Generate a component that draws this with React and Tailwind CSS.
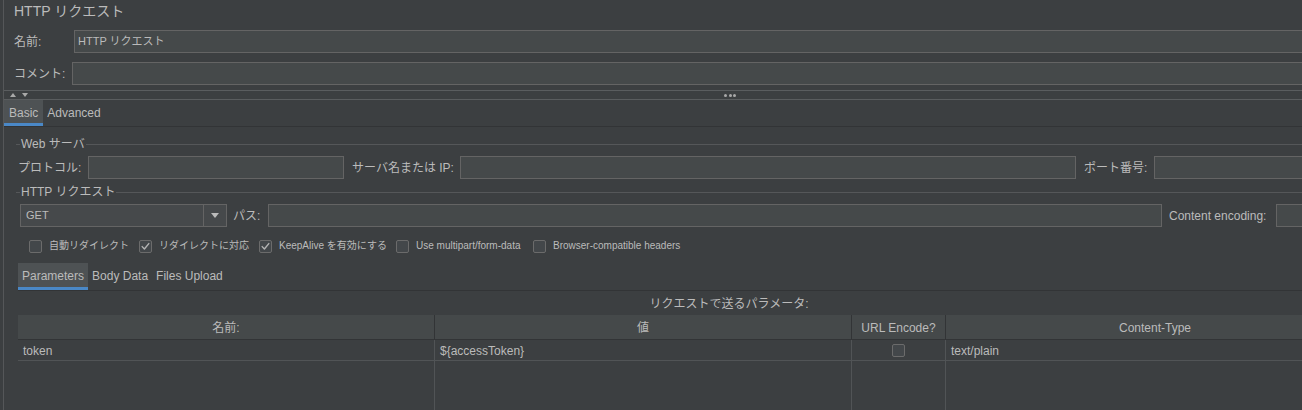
import { ChevronDown } from "lucide-react";

const inputCls = "h-[23px] border border-[#646464] bg-[#45494a] text-[11px] leading-[21px] px-[3px] truncate";

function Check({ checked }) {
  return (
    <div className="w-[13px] h-[13px] shrink-0 rounded-[2px] border border-[#6b6b6b] bg-[#43474a] flex items-center justify-center">
      {checked && (
        <svg width="11" height="11" viewBox="0 0 11 11">
          <path d="M2.2 5.6 L4.4 8 L8.8 2.6" fill="none" stroke="#b4b4b4" strokeWidth="1.4" strokeLinecap="round" strokeLinejoin="round" />
        </svg>
      )}
    </div>
  );
}

function CheckItem({ checked, label, w }) {
  return (
    <div className={`flex items-center gap-[7px] shrink-0 ${w}`}>
      <Check checked={checked} />
      <span className="text-[10px] leading-[14px] whitespace-nowrap">{label}</span>
    </div>
  );
}

function GroupTitle({ children }) {
  return (
    <div className="flex items-center h-[14px]">
      <div className="w-[4px] h-px bg-[#555759]" />
      <span className="px-[1px] text-[12px] leading-[14px] whitespace-nowrap">{children}</span>
      <div className="flex-1 h-px bg-[#555759]" />
    </div>
  );
}

export default function App() {
  return (
    <div className="w-[1302px] h-[410px] overflow-hidden bg-[#3c3f41] text-[#bbbbbb] font-['Liberation_Sans','Noto_Sans_CJK_JP',sans-serif]">
      <div className="ml-[3px] w-[1453px] h-full border-l border-[#555759] flex flex-col">
        {/* title */}
        <div className="h-[22px] pl-[10px] text-[14px] leading-[22px] whitespace-nowrap">HTTP リクエスト</div>

        {/* name */}
        <div className="mt-[8px] flex items-center">
          <div className="w-[70px] pl-[10px] text-[12px] shrink-0">名前:</div>
          <div className={`flex-1 ${inputCls}`}>HTTP リクエスト</div>
        </div>
        {/* comment */}
        <div className="mt-[9px] flex items-center">
          <div className="w-[68px] pl-[10px] text-[12px] shrink-0 whitespace-nowrap">コメント:</div>
          <div className={`flex-1 ${inputCls}`} />
        </div>

        {/* splitter */}
        <div className="mt-[5px] h-[10px] border-y border-[#5a5d5f] grid grid-cols-[1fr_auto_1fr] items-center">
          <div className="flex items-center gap-[6px] pl-[6px]">
            <svg width="6" height="4" viewBox="0 0 6 4"><path d="M0 4 L3 0 L6 4 Z" fill="#a9a9a9" /></svg>
            <svg width="6" height="4" viewBox="0 0 6 4"><path d="M0 0 L6 0 L3 4 Z" fill="#a9a9a9" /></svg>
          </div>
          <div className="flex gap-[1.7px]">
            <div className="w-[3px] h-[3px] rounded-full bg-[#a9a9a9]" />
            <div className="w-[3px] h-[3px] rounded-full bg-[#a9a9a9]" />
            <div className="w-[3px] h-[3px] rounded-full bg-[#a9a9a9]" />
          </div>
          <div />
        </div>

        {/* main tabs */}
        <div className="h-[27px] flex border-b border-[#323436]">
          <div className="h-full px-[5px] pt-[2px] bg-[#4e5254] border-b-[3px] border-[#4a88c7] flex items-center text-[12px]">Basic</div>
          <div className="h-full px-[4px] pt-[2px] flex items-center text-[12px] pb-[3px]">Advanced</div>
        </div>

        {/* Web server group */}
        <div className="mt-[10px] ml-[12px]">
          <GroupTitle>Web サーバ</GroupTitle>
          <div className="mt-[5px] flex items-center pl-[2px]">
            <div className="w-[70px] shrink-0 text-[12px] whitespace-nowrap">プロトコル:</div>
            <div className={`w-[256px] shrink-0 ${inputCls}`} />
            <div className="w-[108px] ml-[8px] shrink-0 text-[12px] whitespace-nowrap">サーバ名または IP:</div>
            <div className={`w-[616px] shrink-0 ${inputCls}`} />
            <div className="w-[70px] ml-[8px] shrink-0 text-[12px] whitespace-nowrap">ポート番号:</div>
            <div className={`flex-1 ${inputCls}`} />
          </div>
        </div>

        {/* HTTP request group */}
        <div className="mt-[6px] ml-[12px]">
          <GroupTitle>HTTP リクエスト</GroupTitle>
          <div className="mt-[5px] flex items-center pl-[4px]">
            <div className="w-[207px] h-[23px] shrink-0 border border-[#646464] bg-[#46494b] flex">
              <div className="flex-1 px-[5px] text-[11px] leading-[21px]">GET</div>
              <div className="w-[23px] border-l border-[#646464] flex items-center justify-center">
                <svg width="8" height="5" viewBox="0 0 8 5"><path d="M0 0 L8 0 L4 5 Z" fill="#bbbbbb" /></svg>
              </div>
            </div>
            <div className="w-[35px] ml-[6px] shrink-0 text-[12px] whitespace-nowrap">パス:</div>
            <div className={`w-[894px] shrink-0 ${inputCls}`} />
            <div className="w-[107px] ml-[7px] shrink-0 text-[12px] whitespace-nowrap">Content encoding:</div>
            <div className={`flex-1 ${inputCls}`} />
          </div>
          <div className="mt-[12px] h-[14px] flex items-center pl-[13px]">
            <CheckItem w="w-[110px]" label="自動リダイレクト" />
            <CheckItem w="w-[120px]" checked label="リダイレクトに対応" />
            <CheckItem w="w-[137px]" checked label="KeepAlive を有効にする" />
            <CheckItem w="w-[137px]" label="Use multipart/form-data" />
            <CheckItem w="w-[150px]" label="Browser-compatible headers" />
          </div>
        </div>

        {/* parameters panel */}
        <div className="mt-[10px] ml-[14px] w-[1422px] flex-1 flex flex-col min-h-0">
          <div className="h-[28px] flex border-b border-[#323436] shrink-0">
            <div className="h-full px-[4px] pt-[2px] bg-[#4e5254] border-b-[3px] border-[#4a88c7] flex items-center text-[12px]">Parameters</div>
            <div className="h-full pl-[4px] pr-[4px] pt-[2px] flex items-center text-[12px] pb-[3px]">Body Data</div>
            <div className="h-full px-[4px] pt-[2px] flex items-center text-[12px] pb-[3px]">Files Upload</div>
          </div>
          <div className="h-[24px] shrink-0 flex items-center justify-center pt-[1px] text-[12px] whitespace-nowrap">リクエストで送るパラメータ:</div>

          <div className="grid grid-cols-[417px_417px_94px_418px] h-[25px] bg-[#45494a] border-b border-[#323436] text-[12px] shrink-0">
            <div className="border-r border-[#323436] flex items-center justify-center pt-[2px]">名前:</div>
            <div className="border-r border-[#323436] flex items-center justify-center pt-[2px]">値</div>
            <div className="border-r border-[#323436] flex items-center justify-center pt-[2px] whitespace-nowrap">URL Encode?</div>
            <div className="flex items-center justify-center pt-[2px]">Content-Type</div>
          </div>
          <div className="grid grid-cols-[417px_417px_94px_418px] h-[21px] border-b border-[#515456] text-[12px] shrink-0">
            <div className="border-r border-[#515456] flex items-center pl-[5px] pt-[1px]">token</div>
            <div className="border-r border-[#515456] flex items-center pl-[5px] pt-[1px]">{"${accessToken}"}</div>
            <div className="border-r border-[#515456] flex items-center justify-center"><Check /></div>
            <div className="flex items-center pl-[5px] pt-[1px]">text/plain</div>
          </div>
          <div className="grid grid-cols-[417px_417px_94px_418px] flex-1">
            <div className="border-r border-[#515456]" />
            <div className="border-r border-[#515456]" />
            <div className="border-r border-[#515456]" />
            <div />
          </div>
        </div>
      </div>
    </div>
  );
}
